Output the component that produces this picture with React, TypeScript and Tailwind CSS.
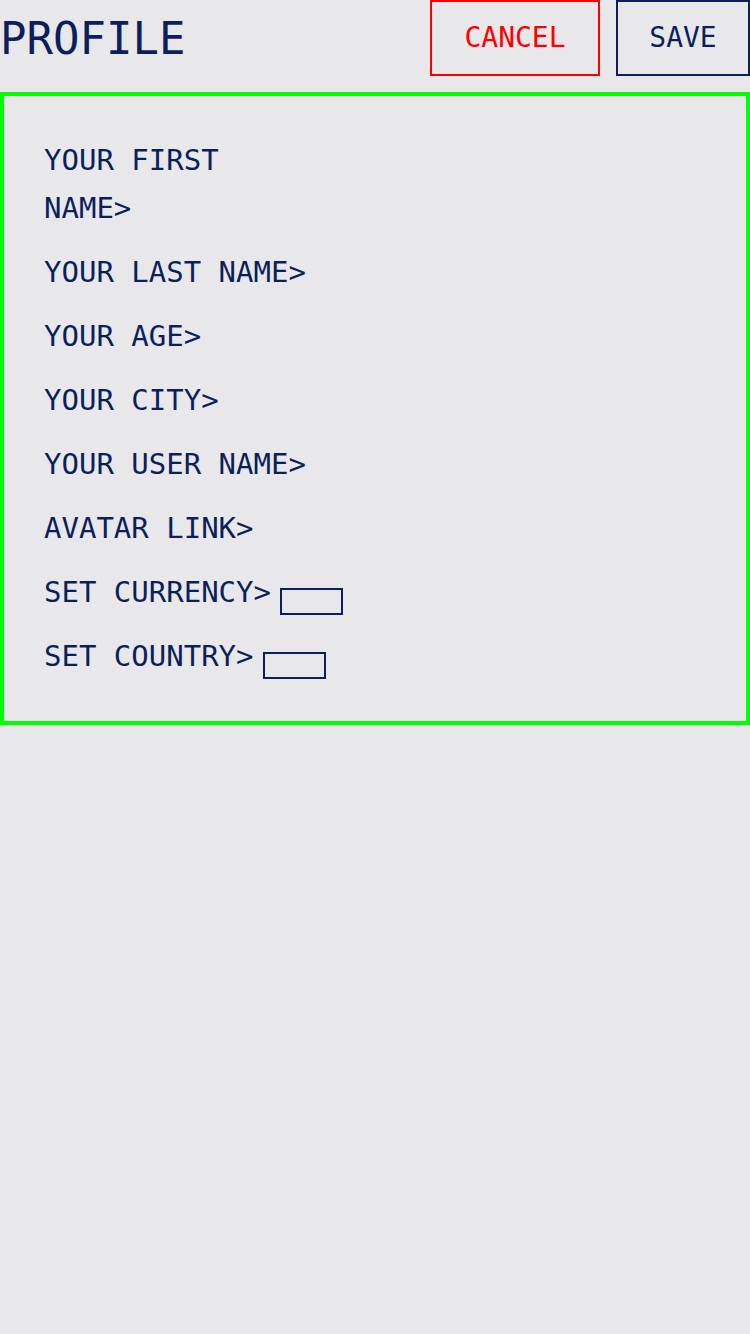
import React from 'react';

const fields = [
  'YOUR LAST NAME>',
  'YOUR AGE>',
  'YOUR CITY>',
  'YOUR USER NAME>',
  'AVATAR LINK>',
];

export default function App() {
  return (
    <div className="min-h-[1334px] w-[750px] bg-[#e8e8ea] text-[#0c1f5c] font-['DejaVu_Sans_Mono',monospace]">
      <header className="flex items-center justify-between h-[76px]">
        <h1 className="text-[44px] leading-none mt-[2px]">PROFILE</h1>
        <div className="flex gap-4 h-full">
          <button className="w-[170px] h-full border-2 border-[#ff0000] text-[#ff0000] text-[28px]">CANCEL</button>
          <button className="w-[134px] h-full border-2 border-[#0c1f5c] text-[28px]">SAVE</button>
        </div>
      </header>

      <section className="mt-4 border-4 border-[#00ff00] px-10 pt-[40px] pb-[41px] flex flex-col gap-4 text-[29px] leading-[48px]">
        <div>
          YOUR FIRST
          <br />
          NAME&gt;
        </div>
        {fields.map((f) => (
          <div key={f}>{f}</div>
        ))}
        <div className="flex items-center">
          <span>SET CURRENCY&gt;</span>
          <span className="ml-[9px] mt-[19px] w-[63px] h-[27px] border-2 border-[#0c1f5c]"></span>
        </div>
        <div className="flex items-center">
          <span>SET COUNTRY&gt;</span>
          <span className="ml-[9px] mt-[19px] w-[63px] h-[27px] border-2 border-[#0c1f5c]"></span>
        </div>
      </section>
    </div>
  );
}
